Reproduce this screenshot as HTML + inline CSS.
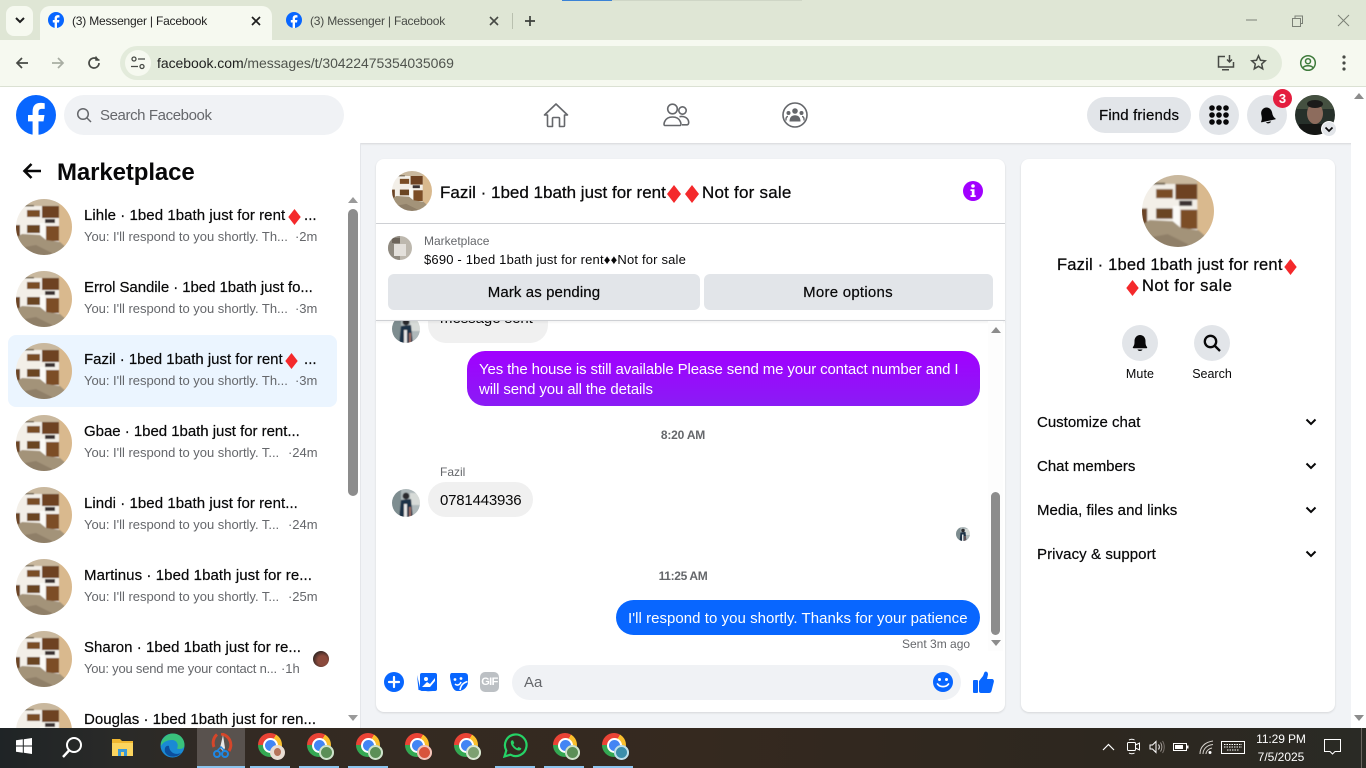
<!DOCTYPE html>
<html><head><meta charset="utf-8"><title>(3) Messenger | Facebook</title>
<style>
html,body{margin:0;padding:0;width:1366px;height:768px;overflow:hidden;background:#f1f3f6;font-family:"Liberation Sans",sans-serif;color:#080809}
.a{position:absolute}
.t{position:absolute;white-space:nowrap;line-height:20px}
svg{position:absolute;overflow:hidden}
.ti{font-size:15px;font-weight:400;letter-spacing:.03px;-webkit-text-stroke:.2px #080809}
.su{font-size:13px;color:#65676b;letter-spacing:-.02px}
.c{transform:translateX(-50%)}
.sel{background:#ebf5ff;border-radius:8px}
.rw{font-size:15px;-webkit-text-stroke:.2px #080809;letter-spacing:.08px}
.chrome{position:absolute;width:24px;height:24px;top:733px;border-radius:50%;background:conic-gradient(from 30deg,#fbc02d 0 120deg,#34a853 120deg 240deg,#ea4335 240deg 360deg)}
.chrome:before{content:"";position:absolute;left:6.5px;top:6.5px;width:11px;height:11px;border-radius:50%;background:#4285f4;box-shadow:0 0 0 2px #fff}
.badge{position:absolute;width:15px;height:15px;border-radius:50%;top:745px}
.ul{position:absolute;top:766px;height:2px;width:40px;background:#8cc4ee}
</style></head><body>
<svg width="0" height="0" style="position:absolute">
<defs>
<filter id="sf" x="-5%" y="-5%" width="110%" height="110%"><feGaussianBlur stdDeviation=".55"/></filter>
<symbol id="room" viewBox="0 0 56 56">
<g filter="url(#sf)">
<rect x="-2" y="-2" width="60" height="60" fill="#f3efe8"/>
<rect x="-2" y="-2" width="60" height="9" fill="#c9b89e"/>
<path d="M43 -2H58V58H43Z" fill="#d9b98e"/>
<rect x="11" y="11" width="13" height="7" fill="#7a4d26"/>
<rect x="26" y="7" width="17" height="12" fill="#6e4322"/>
<rect x="29" y="20" width="10" height="4" fill="#3a3230"/>
<rect x="11" y="26" width="13" height="8" fill="#6a4424"/>
<rect x="24" y="24" width="5" height="15" fill="#fbfaf7"/>
<rect x="30" y="27" width="13" height="15" fill="#7b4d27"/>
<rect x="-2" y="26" width="6" height="12" fill="#6c4526"/>
<path d="M-2 40L6 35L24 36L30 41L44 43L52 50L48 58H-2Z" fill="#a39379"/>
<path d="M-2 50L20 46L36 54L34 58H-2Z" fill="#8f7f68"/>
<rect x="8" y="6" width="10" height="1.500" fill="#6d5f4a"/>
</g>
</symbol>
<symbol id="guy" viewBox="0 0 28 28">
<g filter="url(#sf)">
<rect x="-2" y="-2" width="32" height="32" fill="#aeb8ba"/>
<rect x="-2" y="-2" width="11" height="32" fill="#7e8d90"/>
<rect x="18" y="4" width="12" height="12" fill="#d7dbd8"/>
<path d="M9 11L19 10L21 30H7Z" fill="#1f3146"/>
<rect x="12" y="15" width="3" height="15" fill="#e6e6e6"/>
<circle cx="14" cy="7" r="3.400" fill="#2a2a2d"/>
<rect x="17" y="18" width="2" height="10" fill="#9e6f66"/>
</g>
</symbol>
<symbol id="fb" viewBox="0 0 40 40">
<circle cx="20" cy="20" r="20" fill="#0866ff"/>
<path d="M16.600 40V26.400h-4.600V20h4.600v-3.300c0-6.200 3-8.800 7.900-8.800 1.700 0 3.300.2 4.200.4v5.600h-2.700c-2.700 0-3.500 1.100-3.500 3.400V20h6l-1 6.400h-5V40Z" fill="#fff"/>
</symbol>
<symbol id="dia" viewBox="0 0 14 18"><path d="M7 0L14 9L7 18L0 9Z" fill="#f4292b"/></symbol>
</defs></svg>

<!-- chrome frame -->
<div class="a" style="left:0;top:0;width:1366px;height:40px;background:#dfe6d5"></div>
<div class="a" style="left:562px;top:0;width:50px;height:1px;background:#3b82d6"></div>
<div class="a" style="left:612px;top:0;width:190px;height:1px;background:#cfd6c6"></div>
<div class="a" style="left:0;top:40px;width:1366px;height:46px;background:#f6f9f0"></div>
<div class="a" style="left:0;top:86px;width:1366px;height:1px;background:#dde3d5"></div>
<div class="a" style="left:6px;top:6px;width:27px;height:30px;background:#f6f9f0;border-radius:8px"></div>
<svg style="left:14px;top:16px" width="12" height="9" viewBox="0 0 12 9"><path d="M2 2L6 6L10 2" fill="none" stroke="#1f1f1f" stroke-width="2"/></svg>
<div class="a" style="left:40px;top:6px;width:232px;height:34px;background:#f6f9f0;border-radius:10px 10px 0 0"></div>
<svg style="left:48px;top:12px" width="16" height="16"><use href="#fb" width="16" height="16"/></svg>
<div class="t" style="left:72px;top:11px;font-size:12px;color:#1f1f1f;letter-spacing:-.2px">(3) Messenger | Facebook</div>
<svg style="left:250px;top:15px" width="12" height="12" viewBox="0 0 12 12"><path d="M2 2L10 10M10 2L2 10" stroke="#1f1f1f" stroke-width="1.700"/></svg>
<svg style="left:286px;top:12px" width="16" height="16"><use href="#fb" width="16" height="16"/></svg>
<div class="t" style="left:310px;top:11px;font-size:12px;color:#474a45;letter-spacing:-.2px">(3) Messenger | Facebook</div>
<svg style="left:488px;top:15px" width="12" height="12" viewBox="0 0 12 12"><path d="M2 2L10 10M10 2L2 10" stroke="#474a45" stroke-width="1.600"/></svg>
<div class="a" style="left:512px;top:13px;width:1px;height:16px;background:#b9c0af"></div>
<svg style="left:524px;top:15px" width="12" height="12" viewBox="0 0 12 12"><path d="M6 1V11M1 6H11" stroke="#3c403b" stroke-width="1.700"/></svg>
<svg style="left:1244px;top:14px" width="14" height="12"><path d="M2 6H13" stroke="#7b8076" stroke-width="1"/></svg>
<svg style="left:1290px;top:14px" width="14" height="14" fill="none" stroke="#7b8076"><path d="M2.500 4.500H10.500V12.500H2.500ZM5 4.500V2H12.500V9.500H10.500"/></svg>
<svg style="left:1337px;top:14px" width="13" height="13"><path d="M1 1L12 12M12 1L1 12" stroke="#7b8076" stroke-width="1"/></svg>

<svg style="left:14px;top:55px" width="16" height="16" viewBox="0 0 16 16" fill="none" stroke="#474a45" stroke-width="1.700"><path d="M14 8H3M8 3L3 8L8 13"/></svg>
<svg style="left:50px;top:55px" width="16" height="16" viewBox="0 0 16 16" fill="none" stroke="#a9aea3" stroke-width="1.700"><path d="M2 8H13M8 3L13 8L8 13"/></svg>
<svg style="left:86px;top:55px" width="16" height="16" viewBox="0 0 16 16" fill="none" stroke="#474a45" stroke-width="1.700"><path d="M13 8A5 5 0 1 1 11 4"/><path d="M10 1.500V5H13.500" stroke-width="1.500" fill="#474a45"/></svg>
<div class="a" style="left:120px;top:46px;width:1162px;height:34px;border-radius:17px;background:#e3ebdb"></div>
<div class="a" style="left:125px;top:50px;width:26px;height:26px;border-radius:50%;background:#f6f9f0"></div>
<svg style="left:130px;top:55px" width="16" height="16" viewBox="0 0 16 16" fill="none" stroke="#474a45" stroke-width="1.300"><circle cx="4" cy="4" r="2"/><path d="M8 4H15M1 11.500H8"/><circle cx="12" cy="11.500" r="2"/></svg>
<div class="t" style="left:157px;top:53px;font-size:14px;color:#50544e;letter-spacing:-.05px"><span style="color:#1f1f1f">facebook.com</span>/messages/t/30422475354035069</div>
<svg style="left:1217px;top:54px" width="18" height="18" viewBox="0 0 18 18" fill="none" stroke="#474a45" stroke-width="1.500"><path d="M8 2.500H1.500V13H16.500V8M5 15.800H12" /><path d="M12.500 1V7.500M10 5.500L12.500 8L15 5.500"/></svg>
<svg style="left:1250px;top:54px" width="17" height="17" viewBox="0 0 17 17" fill="none" stroke="#474a45" stroke-width="1.500"><path d="M8.500 1.800L10.500 6.300L15.300 6.800L11.700 10L12.700 14.800L8.500 12.300L4.300 14.800L5.300 10L1.700 6.800L6.500 6.300Z"/></svg>
<svg style="left:1299px;top:54px" width="18" height="18" viewBox="0 0 18 18" fill="none" stroke="#3f7b3c" stroke-width="1.500"><circle cx="9" cy="9" r="7.300"/><circle cx="9" cy="7.200" r="2.500"/><path d="M3.800 14C5.500 11 12.500 11 14.200 14"/></svg>
<svg style="left:1342px;top:55px" width="4" height="16"><circle cx="2" cy="2" r="1.600" fill="#474a45"/><circle cx="2" cy="8" r="1.600" fill="#474a45"/><circle cx="2" cy="14" r="1.600" fill="#474a45"/></svg>

<!-- FB header -->
<div class="a" style="left:0;top:87px;width:1366px;height:56px;background:#fff;box-shadow:0 1px 2px rgba(0,0,0,.12)"></div>
<svg style="left:16px;top:95px" width="40" height="40"><use href="#fb" width="40" height="40"/></svg>
<div class="a" style="left:64px;top:95px;width:280px;height:40px;border-radius:20px;background:#f0f2f5"></div>
<svg style="left:76px;top:107px" width="16" height="16" viewBox="0 0 16 16" fill="none" stroke="#65676b" stroke-width="1.500"><circle cx="7" cy="7" r="5.300"/><path d="M11 11L15 15"/></svg>
<div class="t" style="left:100px;top:105px;font-size:15px;color:#65676b;letter-spacing:-.4px;line-height:21px">Search Facebook</div>
<svg style="left:543px;top:102px" width="26" height="26" viewBox="0 0 26 26" fill="none" stroke="#65676b" stroke-width="1.600" stroke-linejoin="round"><path d="M1.500 13L13 2L24.500 13H21.500V23.500A1 1 0 0 1 20.500 24.500H16.500V16.500A1 1 0 0 0 15.500 15.500H10.500A1 1 0 0 0 9.500 16.500V24.500H5.500A1 1 0 0 1 4.500 23.500V13Z"/></svg>
<svg style="left:663px;top:102px" width="27" height="26" viewBox="0 0 27 26" fill="none" stroke="#65676b" stroke-width="1.600"><circle cx="9.500" cy="7" r="4.800"/><path d="M2 23.500C.5 23.500 1 21 1.700 19.500C3 16.500 6 15 9.500 15C13 15 16 16.500 17.300 19.500C18 21 18.500 23.500 17 23.500Z"/><circle cx="19.500" cy="8.500" r="3.700"/><path d="M16.500 14.700C20.500 13.800 24.500 15.500 25.500 19C26 21 25.500 22.800 24 22.800H19"/></svg>
<svg style="left:782px;top:102px" width="26" height="26" viewBox="0 0 26 26"><circle cx="13" cy="13" r="12" fill="none" stroke="#65676b" stroke-width="1.600"/><circle cx="13" cy="9" r="2.800" fill="#65676b"/><circle cx="6.500" cy="11" r="2" fill="#65676b"/><circle cx="19.500" cy="11" r="2" fill="#65676b"/><path d="M7.500 19.500C7.500 15 10 13.300 13 13.300C16 13.300 18.500 15 18.500 19.500Z" fill="#65676b"/><path d="M4 18.500C3.700 16 4.500 14.500 6 14.500M22 18.500C22.300 16 21.500 14.500 20 14.500" stroke="#65676b" stroke-width="1.400" fill="none"/></svg>
<div class="a" style="left:1087px;top:97px;width:104px;height:36px;border-radius:18px;background:#e2e5e9"></div>
<div class="t" style="left:1099px;top:106px;font-size:15px;color:#080809;-webkit-text-stroke:.2px #080809;letter-spacing:.15px">Find friends</div>
<div class="a" style="left:1199px;top:95px;width:40px;height:40px;border-radius:50%;background:#e2e5e9"></div>
<svg style="left:1209px;top:105px" width="20" height="20" fill="#080809"><circle cx="3" cy="3" r="2.800"/><circle cx="10" cy="3" r="2.800"/><circle cx="17" cy="3" r="2.800"/><circle cx="3" cy="10" r="2.800"/><circle cx="10" cy="10" r="2.800"/><circle cx="17" cy="10" r="2.800"/><circle cx="3" cy="17" r="2.800"/><circle cx="10" cy="17" r="2.800"/><circle cx="17" cy="17" r="2.800"/></svg>
<div class="a" style="left:1247px;top:95px;width:40px;height:40px;border-radius:50%;background:#e2e5e9"></div>
<svg style="left:1257px;top:105px" width="20" height="20" viewBox="0 0 20 20" fill="#080809"><path d="M3 15C4.500 13 4.500 11 4.500 8.500C4.500 5 7 2.500 10 2.500C13 2.500 15.500 5 15.500 8.500C15.500 11 15.500 13 17.500 15C18 15.700 17.500 16 17 16H3.500C2.800 16 2.500 15.600 3 15ZM7.500 17H12.500C12 19 8 19 7.500 17Z" transform="rotate(-12 10 10)"/></svg>
<div class="a" style="left:1273px;top:89px;width:19px;height:19px;border-radius:50%;background:#e41e3f;color:#fff;font-size:13px;font-weight:700;text-align:center;line-height:19px">3</div>
<div class="a" style="left:1295px;top:95px;width:40px;height:40px;border-radius:50%;overflow:hidden;background:#26302a">
<div class="a" style="left:0;top:0;width:40px;height:14px;background:#445040"></div>
<div class="a" style="left:12px;top:8px;width:16px;height:21px;border-radius:50%;background:#8d6c5d"></div>
<div class="a" style="left:12px;top:5px;width:16px;height:8px;border-radius:50%;background:#1b1b1a"></div>
<div class="a" style="left:4px;top:29px;width:32px;height:14px;background:#141614"></div>
</div>
<div class="a" style="left:1322px;top:122px;width:14px;height:14px;border-radius:50%;background:#e2e5e9;box-shadow:0 0 0 1px #fff"></div>
<svg style="left:1324px;top:126px" width="10" height="7"><path d="M1.500 1.500L5 5L8.500 1.500" fill="none" stroke="#080809" stroke-width="1.700"/></svg>

<!-- page scrollbar -->
<div class="a" style="left:1351px;top:87px;width:15px;height:641px;background:#fff"></div>
<svg style="left:1354px;top:93px" width="10" height="6"><path d="M0 6L5 0L10 6Z" fill="#8c8c8c"/></svg>
<svg style="left:1354px;top:715px" width="10" height="6"><path d="M0 0L5 6L10 0Z" fill="#8c8c8c"/></svg>

<!-- Sidebar -->
<div class="a" style="left:0;top:143px;width:360px;height:585px;background:#fff;border-right:1px solid #e4e6ea;overflow:hidden" id="side"></div>
<svg style="left:22px;top:162px" width="20" height="18" viewBox="0 0 20 18" fill="none" stroke="#080809" stroke-width="2.600"><path d="M19 9H3M9.500 2L2.500 9L9.500 16"/></svg>
<div class="t" style="left:57px;top:158px;font-size:24px;font-weight:700;line-height:30px;letter-spacing:-.1px">Marketplace</div>

<div class="a sel" style="left:8px;top:335px;width:329px;height:72px"></div>

<svg style="left:16px;top:199px;border-radius:50%" width="56" height="56"><use href="#room" width="56" height="56"/></svg>
<div class="t ti" style="left:84px;top:206px;letter-spacing:.06px">Lihle · 1bed 1bath just for rent</div>
<svg style="left:288px;top:209px" width="13" height="16"><use href="#dia" width="13" height="16"/></svg>
<div class="t ti" style="left:304px;top:206px">...</div>
<div class="t su" style="left:84px;top:227px">You: I'll respond to you shortly. Th...</div><div class="t su" style="left:295px;top:227px">·2m</div>

<svg style="left:16px;top:271px;border-radius:50%" width="56" height="56"><use href="#room" width="56" height="56"/></svg>
<div class="t ti" style="left:84px;top:278px;letter-spacing:-.06px">Errol Sandile · 1bed 1bath just fo...</div>
<div class="t su" style="left:84px;top:299px">You: I'll respond to you shortly. Th...</div><div class="t su" style="left:295px;top:299px">·3m</div>

<svg style="left:16px;top:343px;border-radius:50%" width="56" height="56"><use href="#room" width="56" height="56"/></svg>
<div class="t ti" style="left:84px;top:350px;letter-spacing:-.02px">Fazil · 1bed 1bath just for rent</div>
<svg style="left:285px;top:353px" width="13" height="16"><use href="#dia" width="13" height="16"/></svg>
<div class="t ti" style="left:304px;top:350px">...</div>
<div class="t su" style="left:84px;top:371px">You: I'll respond to you shortly. Th...</div><div class="t su" style="left:295px;top:371px">·3m</div>

<svg style="left:16px;top:415px;border-radius:50%" width="56" height="56"><use href="#room" width="56" height="56"/></svg>
<div class="t ti" style="left:84px;top:422px;letter-spacing:-.03px">Gbae · 1bed 1bath just for rent...</div>
<div class="t su" style="left:84px;top:443px">You: I'll respond to you shortly. T...</div><div class="t su" style="left:288px;top:443px">·24m</div>

<svg style="left:16px;top:487px;border-radius:50%" width="56" height="56"><use href="#room" width="56" height="56"/></svg>
<div class="t ti" style="left:84px;top:494px;letter-spacing:.06px">Lindi · 1bed 1bath just for rent...</div>
<div class="t su" style="left:84px;top:515px">You: I'll respond to you shortly. T...</div><div class="t su" style="left:288px;top:515px">·24m</div>

<svg style="left:16px;top:559px;border-radius:50%" width="56" height="56"><use href="#room" width="56" height="56"/></svg>
<div class="t ti" style="left:84px;top:566px;letter-spacing:.08px">Martinus · 1bed 1bath just for re...</div>
<div class="t su" style="left:84px;top:587px">You: I'll respond to you shortly. T...</div><div class="t su" style="left:288px;top:587px">·25m</div>

<svg style="left:16px;top:631px;border-radius:50%" width="56" height="56"><use href="#room" width="56" height="56"/></svg>
<div class="t ti" style="left:84px;top:638px">Sharon · 1bed 1bath just for re...</div>
<div class="t su" style="left:84px;top:659px;letter-spacing:-.2px">You: you send me your contact n...</div><div class="t su" style="left:281px;top:659px">·1h</div>
<div class="a" style="left:313px;top:651px;width:16px;height:16px;border-radius:50%;background:radial-gradient(circle at 60% 60%,#8b4a3c 0 35%,#3a2a26 70%)"></div>

<svg style="left:16px;top:703px;border-radius:50%" width="56" height="56"><use href="#room" width="56" height="56"/></svg>
<div class="t ti" style="left:84px;top:710px;letter-spacing:.03px">Douglas · 1bed 1bath just for ren...</div>

<!-- sidebar scrollbar -->
<svg style="left:348px;top:197px" width="10" height="6"><path d="M0 6L5 0L10 6Z" fill="#9a9a9a"/></svg>
<div class="a" style="left:348px;top:209px;width:10px;height:287px;border-radius:5px;background:#8c8c8c"></div>
<svg style="left:348px;top:715px" width="10" height="6"><path d="M0 0L5 6L10 0Z" fill="#9a9a9a"/></svg>

<!-- Conversation card -->
<div class="a" style="left:376px;top:159px;width:629px;height:553px;background:#fff;border-radius:8px;box-shadow:0 1px 2px rgba(0,0,0,.12)"></div>
<svg style="left:392px;top:171px;border-radius:50%" width="40" height="40"><use href="#room" width="40" height="40"/></svg>
<div class="t" style="left:440px;top:183px;font-size:17px;-webkit-text-stroke:.25px #080809;letter-spacing:0">Fazil · 1bed 1bath just for rent</div>
<svg style="left:667px;top:185px" width="14" height="18"><use href="#dia" width="14" height="18"/></svg>
<svg style="left:685px;top:185px" width="14" height="18"><use href="#dia" width="14" height="18"/></svg>
<div class="t" style="left:702px;top:183px;font-size:17px;-webkit-text-stroke:.25px #080809;letter-spacing:.22px">Not for sale</div>
<svg style="left:963px;top:181px" width="20" height="20" viewBox="0 0 20 20"><circle cx="10" cy="10" r="10" fill="#a100ff"/><circle cx="10" cy="5" r="1.800" fill="#fff"/><path d="M7.500 8.300H11.500V14.300H12.700V16H7.500V14.300H8.800V10H7.500Z" fill="#fff"/></svg>
<div class="a" style="left:376px;top:223px;width:629px;height:1px;background:#ced0d4"></div>
<svg style="left:388px;top:236px;border-radius:50%" width="24" height="24" viewBox="0 0 24 24"><rect width="24" height="24" fill="#bdb8ae"/><rect x="0" y="0" width="12" height="24" fill="#8f8a80"/><rect x="6" y="8" width="12" height="12" fill="#e3e0db"/><rect x="4" y="2" width="8" height="5" fill="#6c645a"/></svg>
<div class="t" style="left:424px;top:231px;font-size:12px;color:#65676b">Marketplace</div>
<div class="t" style="left:424px;top:250px;font-size:13px;letter-spacing:.18px">$690 - 1bed 1bath just for rent♦♦Not for sale</div>
<div class="a" style="left:388px;top:274px;width:312px;height:36px;border-radius:6px;background:#e2e5e9"></div>
<div class="a" style="left:704px;top:274px;width:289px;height:36px;border-radius:6px;background:#e2e5e9"></div>
<div class="t c" style="left:544px;top:283px;font-size:15px;-webkit-text-stroke:.2px #080809;letter-spacing:.1px">Mark as pending</div>
<div class="t c" style="left:848px;top:283px;font-size:15px;-webkit-text-stroke:.2px #080809;letter-spacing:.25px">More options</div>

<!-- messages -->
<div class="a" style="left:376px;top:321px;width:629px;height:330px;overflow:hidden">
<div class="a" style="left:52px;top:-28px;width:120px;height:50px;border-radius:18px;background:#f0f0f0"></div>
<div class="t" style="left:64px;top:-12px;font-size:15px;letter-spacing:-.05px">message sent</div>
<svg style="left:16px;top:-6px;border-radius:50%" width="28" height="28"><use href="#guy" width="28" height="28"/></svg>
</div>
<div class="a" style="left:376px;top:320px;width:629px;height:1px;background:#ced0d4;box-shadow:0 1px 2px rgba(0,0,0,.12)"></div>
<div class="a" style="left:467px;top:351px;width:513px;height:55px;border-radius:18px;background:linear-gradient(180deg,#a100ff,#8a1cf5)"></div>
<div class="t" style="left:479px;top:360px;font-size:15px;color:#fff;letter-spacing:-.13px">Yes the house is still available Please send me your contact number and I</div>
<div class="t" style="left:479px;top:380px;font-size:15px;color:#fff;letter-spacing:-.13px">will send you all the details</div>
<div class="t c" style="left:683px;top:425px;font-size:12px;font-weight:700;color:#65676b;letter-spacing:-.2px">8:20 AM</div>
<div class="t" style="left:440px;top:462px;font-size:12px;color:#65676b">Fazil</div>
<svg style="left:392px;top:489px;border-radius:50%" width="28" height="28"><use href="#guy" width="28" height="28"/></svg>
<div class="a" style="left:428px;top:482px;width:105px;height:35px;border-radius:18px;background:#f0f0f0"></div>
<div class="t" style="left:440px;top:491px;font-size:15px;letter-spacing:-.2px">0781443936</div>
<svg style="left:956px;top:527px;border-radius:50%" width="14" height="14"><use href="#guy" width="14" height="14"/></svg>
<div class="t c" style="left:683px;top:566px;font-size:12px;font-weight:700;color:#65676b;letter-spacing:-.35px">11:25 AM</div>
<div class="a" style="left:616px;top:600px;width:364px;height:35px;border-radius:18px;background:#0866ff"></div>
<div class="t" style="left:628px;top:609px;font-size:15px;color:#fff;letter-spacing:.04px">I'll respond to you shortly. Thanks for your patience</div>
<div class="t" style="left:902px;top:634px;font-size:12px;color:#65676b">Sent 3m ago</div>

<!-- conv scrollbar -->
<div class="a" style="left:988px;top:321px;width:15px;height:330px;background:#fdfdfd"></div>
<svg style="left:991px;top:327px" width="10" height="6"><path d="M0 6L5 0L10 6Z" fill="#8c8c8c"/></svg>
<div class="a" style="left:991px;top:492px;width:9px;height:143px;border-radius:5px;background:#8c8c8c"></div>
<svg style="left:991px;top:640px" width="10" height="6"><path d="M0 0L5 6L10 0Z" fill="#8c8c8c"/></svg>

<!-- composer -->
<svg style="left:384px;top:672px" width="20" height="20" viewBox="0 0 20 20"><circle cx="10" cy="10" r="10" fill="#0866ff"/><path d="M10 5V15M5 10H15" stroke="#fff" stroke-width="2.200" stroke-linecap="round"/></svg>
<svg style="left:417px;top:672px" width="20" height="20" viewBox="0 0 20 20"><path d="M0 3L1.500 18L16 20L3.500 17.500Z" fill="#0866ff"/><rect x="3" y="1" width="17" height="18" rx="2" fill="#0866ff"/><circle cx="9" cy="7" r="2" fill="#fff"/><path d="M5 15L10 10L13 12L18 6V9L13 15Z" fill="#fff"/></svg>
<svg style="left:449px;top:672px" width="20" height="20" viewBox="0 0 20 20"><path d="M3 1H15C18 1 19 2 19 5V10C19 15 14 19 10 19H8C4 19 2 12 1 5C1 2 1.500 1 3 1Z" fill="#0866ff"/><circle cx="6" cy="7.500" r="1.400" fill="#fff"/><circle cx="12" cy="6.500" r="1.400" fill="#fff"/><path d="M6 12C8 14 11 13 12 10" stroke="#fff" stroke-width="1.500" fill="none"/><path d="M11 18C12 13 14 11 18.500 9.500" stroke="#fff" stroke-width="1.500" fill="none"/></svg>
<div class="a" style="left:480px;top:672px;width:19px;height:20px;border-radius:5px;background:#bcc0c4;color:#fff;font-size:11px;font-weight:700;text-align:center;line-height:21px;letter-spacing:-.6px">GIF</div>
<div class="a" style="left:512px;top:665px;width:449px;height:35px;border-radius:18px;background:#f0f2f5"></div>
<div class="t" style="left:524px;top:673px;font-size:15px;color:#65676b">Aa</div>
<svg style="left:933px;top:672px" width="20" height="20" viewBox="0 0 20 20"><circle cx="10" cy="10" r="10" fill="#0866ff"/><circle cx="6.500" cy="7.500" r="1.500" fill="#fff"/><circle cx="13.500" cy="7.500" r="1.500" fill="#fff"/><path d="M4.500 12C7 15.500 13 15.500 15.500 12" stroke="#fff" stroke-width="1.700" fill="none" stroke-linecap="round"/></svg>
<svg style="left:973px;top:671px" width="21" height="22" viewBox="0 0 21 22" fill="#0866ff"><rect x="0" y="9" width="5" height="13" rx="1"/><path d="M6 10L10 5C11 3 11 1.500 12 .8C14 0 15.500 2 14.800 4.500L14 8H19C20.500 8 21.200 9.500 20.800 11L18.500 20C18 21.500 17 22 16 22H8C6.800 22 6 21.200 6 20Z"/></svg>

<!-- Right card -->
<div class="a" style="left:1021px;top:159px;width:314px;height:553px;background:#fff;border-radius:8px;box-shadow:0 1px 2px rgba(0,0,0,.12)"></div>
<svg style="left:1142px;top:175px;border-radius:50%" width="72" height="72"><use href="#room" width="72" height="72"/></svg>
<div class="t" style="left:1057px;top:255px;font-size:16.500px;-webkit-text-stroke:.25px #080809;letter-spacing:.2px">Fazil · 1bed 1bath just for rent</div>
<svg style="left:1284px;top:259px" width="13" height="16"><use href="#dia" width="13" height="16"/></svg>
<svg style="left:1126px;top:280px" width="13" height="16"><use href="#dia" width="13" height="16"/></svg>
<div class="t" style="left:1142px;top:276px;font-size:16.500px;-webkit-text-stroke:.25px #080809;letter-spacing:.5px">Not for sale</div>
<div class="a" style="left:1122px;top:325px;width:36px;height:36px;border-radius:50%;background:#e2e5e9"></div>
<svg style="left:1131px;top:334px" width="18" height="18" viewBox="0 0 18 18" fill="#080809"><path d="M2 13C3.500 11 3.500 9.500 3.500 7C3.500 3.500 6 1 9 1C12 1 14.500 3.500 14.500 7C14.500 9.500 14.500 11 16 13C16.500 13.800 16 14.200 15.500 14.200H2.500C2 14.200 1.500 13.800 2 13ZM6.500 15.500H11.500C11 17.500 7 17.500 6.500 15.500Z"/></svg>
<div class="a" style="left:1194px;top:325px;width:36px;height:36px;border-radius:50%;background:#e2e5e9"></div>
<svg style="left:1203px;top:334px" width="18" height="18" viewBox="0 0 18 18" fill="none" stroke="#080809" stroke-width="2.300"><circle cx="7.500" cy="7.500" r="5.700"/><path d="M12 12L17 17"/></svg>
<div class="t c" style="left:1140px;top:364px;font-size:12.500px;letter-spacing:.1px">Mute</div>
<div class="t c" style="left:1212px;top:364px;font-size:12.500px">Search</div>
<div class="t rw" style="left:1037px;top:413px;letter-spacing:0">Customize chat</div>
<div class="t rw" style="left:1037px;top:457px;letter-spacing:0">Chat members</div>
<div class="t rw" style="left:1037px;top:501px;letter-spacing:.05px">Media, files and links</div>
<div class="t rw" style="left:1037px;top:545px">Privacy &amp; support</div>
<svg style="left:1305px;top:418px" width="12" height="8"><path d="M1.500 1.500L6 6L10.500 1.500" fill="none" stroke="#080809" stroke-width="2"/></svg>
<svg style="left:1305px;top:462px" width="12" height="8"><path d="M1.500 1.500L6 6L10.500 1.500" fill="none" stroke="#080809" stroke-width="2"/></svg>
<svg style="left:1305px;top:506px" width="12" height="8"><path d="M1.500 1.500L6 6L10.500 1.500" fill="none" stroke="#080809" stroke-width="2"/></svg>
<svg style="left:1305px;top:550px" width="12" height="8"><path d="M1.500 1.500L6 6L10.500 1.500" fill="none" stroke="#080809" stroke-width="2"/></svg>

<!-- Taskbar -->
<div class="a" style="left:0;top:728px;width:1366px;height:40px;background:linear-gradient(90deg,#1f2426 0,#2a2a28 120px,#332a23 240px,#35291f 700px,#2d271f 1100px,#2a2a25 1366px)"></div>
<div class="a" style="left:197px;top:728px;width:48px;height:40px;background:#59524e"></div>
<svg style="left:16px;top:738px" width="16" height="16" fill="#fff"><path d="M0 2.300L6.800 1.300V7.500H0ZM7.800 1.200L16 0V7.500H7.800ZM0 8.500H6.800V14.700L0 13.700ZM7.800 8.500H16V16L7.800 14.800Z"/></svg>
<svg style="left:61px;top:736px" width="22" height="22" viewBox="0 0 22 22" fill="none" stroke="#fff" stroke-width="2"><circle cx="13" cy="9" r="7"/><path d="M8 14.500L2 21" stroke-width="2.400"/></svg>
<svg style="left:112px;top:737px" width="21" height="19" viewBox="0 0 21 19"><path d="M0 2H8L10 4H21V19H0Z" fill="#f0b730"/><rect y="6" width="21" height="13" fill="#fbd55f"/><rect x="6" y="12" width="9" height="7" fill="#3b9ad8"/><rect x="9" y="15" width="3" height="4" fill="#fbd55f"/></svg>
<svg style="left:160px;top:733px" width="25" height="25" viewBox="0 0 25 25"><circle cx="12.500" cy="12.500" r="12" fill="#1a8ad4"/><path d="M1 10C3 3 9 .5 13 .5C20 .5 24.500 6 24.500 12C24.500 16 20 16.500 17 15.500C19 12 17 7 12 7C7 7 3 9 1 13Z" fill="#39c27c"/><path d="M9 13C9 18 14 23 21 20C17 25 8 25 5 19C4 15 6 12 9 13Z" fill="#0c4f9e"/></svg>
<svg style="left:209px;top:733px" width="24" height="26" viewBox="0 0 24 26"><path d="M12 1A11 11 0 0 1 20 18" fill="none" stroke="#d5462a" stroke-width="3"/><path d="M8 1.500A11 11 0 0 0 5 14" fill="none" stroke="#d5462a" stroke-width="3"/><path d="M14 2L11 15L14 18L16 15Z" fill="#e8e8e8"/><circle cx="8" cy="21" r="3" fill="none" stroke="#1e88e5" stroke-width="2"/><circle cx="16" cy="21" r="3" fill="none" stroke="#1e88e5" stroke-width="2"/><path d="M8 18L12 14L16 18" stroke="#1e88e5" stroke-width="1.500" fill="none"/></svg>
<div class="chrome" style="left:258px"></div><div class="badge" style="left:270px;background:#e9ded4"></div><div class="a" style="left:274px;top:748px;width:7px;height:8px;border-radius:50%;background:#b5745a"></div>
<div class="chrome" style="left:307px"></div><div class="badge" style="left:319px;background:#5b8f57;box-shadow:inset 0 0 0 2px #cfe3cc"></div>
<div class="chrome" style="left:356px"></div><div class="badge" style="left:368px;background:#5b8f57;box-shadow:inset 0 0 0 2px #cfe3cc"></div>
<div class="chrome" style="left:405px"></div><div class="badge" style="left:417px;background:#d8543c;box-shadow:inset 0 0 0 2px #f2c6bc"></div>
<div class="chrome" style="left:454px"></div><div class="badge" style="left:466px;background:#7da071;box-shadow:inset 0 0 0 2px #dbe8d4"></div>
<svg style="left:503px;top:733px" width="25" height="25" viewBox="0 0 25 25"><path d="M1.500 23.500L3.300 17.500A10.800 10.800 0 1 1 7.500 21.700Z" fill="none" stroke="#25d366" stroke-width="2.200"/><path d="M8.500 7.500C7.500 8.500 7.500 10.500 9 13C11 16 14 17.500 16 17.500C17.500 17.500 18.300 16.500 18.300 15.300L15.500 14L14.300 15.300C12.800 14.800 10.800 12.800 10.300 11.300L11.300 10L10 7.200Z" fill="#25d366"/></svg>
<div class="chrome" style="left:553px"></div><div class="badge" style="left:565px;background:#5b8f57;box-shadow:inset 0 0 0 2px #cfe3cc"></div>
<div class="chrome" style="left:602px"></div><div class="badge" style="left:614px;background:#3b8eaa;box-shadow:inset 0 0 0 2px #bfe0ea"></div>
<div class="ul" style="left:197px;width:48px"></div><div class="ul" style="left:250px"></div><div class="ul" style="left:299px"></div><div class="ul" style="left:348px"></div><div class="ul" style="left:495px"></div><div class="ul" style="left:544px"></div><div class="ul" style="left:593px"></div>
<!-- tray -->
<svg style="left:1102px;top:743px" width="13" height="8" fill="none" stroke="#fff" stroke-width="1.200"><path d="M1 7L6.500 1.500L12 7"/></svg>
<svg style="left:1126px;top:738px" width="15" height="17" viewBox="0 0 15 17" fill="none" stroke="#fff"><rect x="1.500" y="4.500" width="8" height="8" rx="1"/><path d="M9.500 7L13.500 5V12L9.500 10M3 2C4.500 1 7 1 8.500 2M3 15C4.500 16 7 16 8.500 15"/></svg>
<svg style="left:1149px;top:740px" width="16" height="14" viewBox="0 0 16 14" fill="none" stroke="#fff"><path d="M1 5H3.500L7 1.500V12.500L3.500 9H1Z"/><path d="M9.500 4.500C10.500 6 10.500 8 9.500 9.500"/><path d="M11.500 2.500C13.300 5 13.300 9 11.500 11.500" stroke="#a8a29c"/><path d="M13.500 1C15.800 4.500 15.800 9.500 13.500 13" stroke="#77716b"/></svg>
<svg style="left:1173px;top:742px" width="16" height="10" fill="none" stroke="#fff"><rect x=".5" y="1.500" width="13" height="7"/><rect x="2" y="3" width="8" height="4" fill="#fff" stroke="none"/><rect x="14" y="3.500" width="1.500" height="3" fill="#fff" stroke="none"/></svg>
<svg style="left:1199px;top:740px" width="15" height="15" viewBox="0 0 15 15" fill="none" stroke="#d8d4cf"><path d="M1 14C1 7 6 2 14 1M4 14C4 9 8 5 14 4.500M7 14C7 11 10 8.500 13 8"/><circle cx="11" cy="12.500" r="1.500" fill="#fff" stroke="none"/></svg>
<svg style="left:1221px;top:741px" width="24" height="13" fill="none" stroke="#fff"><rect x=".5" y=".5" width="23" height="12"/><path d="M3 3.500H21M3 6H21M6 9H18" stroke-dasharray="1.500 1"/></svg>
<div class="t c" style="left:1281px;top:729px;font-size:12px;color:#fff;letter-spacing:-.1px">11:29 PM</div>
<div class="t c" style="left:1281px;top:747px;font-size:12px;color:#fff">7/5/2025</div>
<svg style="left:1324px;top:739px" width="17" height="16" fill="none" stroke="#fff"><path d="M.5.500H16.500V12.500H11L8.500 15L6 12.500H.5Z"/></svg>
<div class="a" style="left:1361px;top:728px;width:1px;height:40px;background:#6a6560"></div>
</body></html>
